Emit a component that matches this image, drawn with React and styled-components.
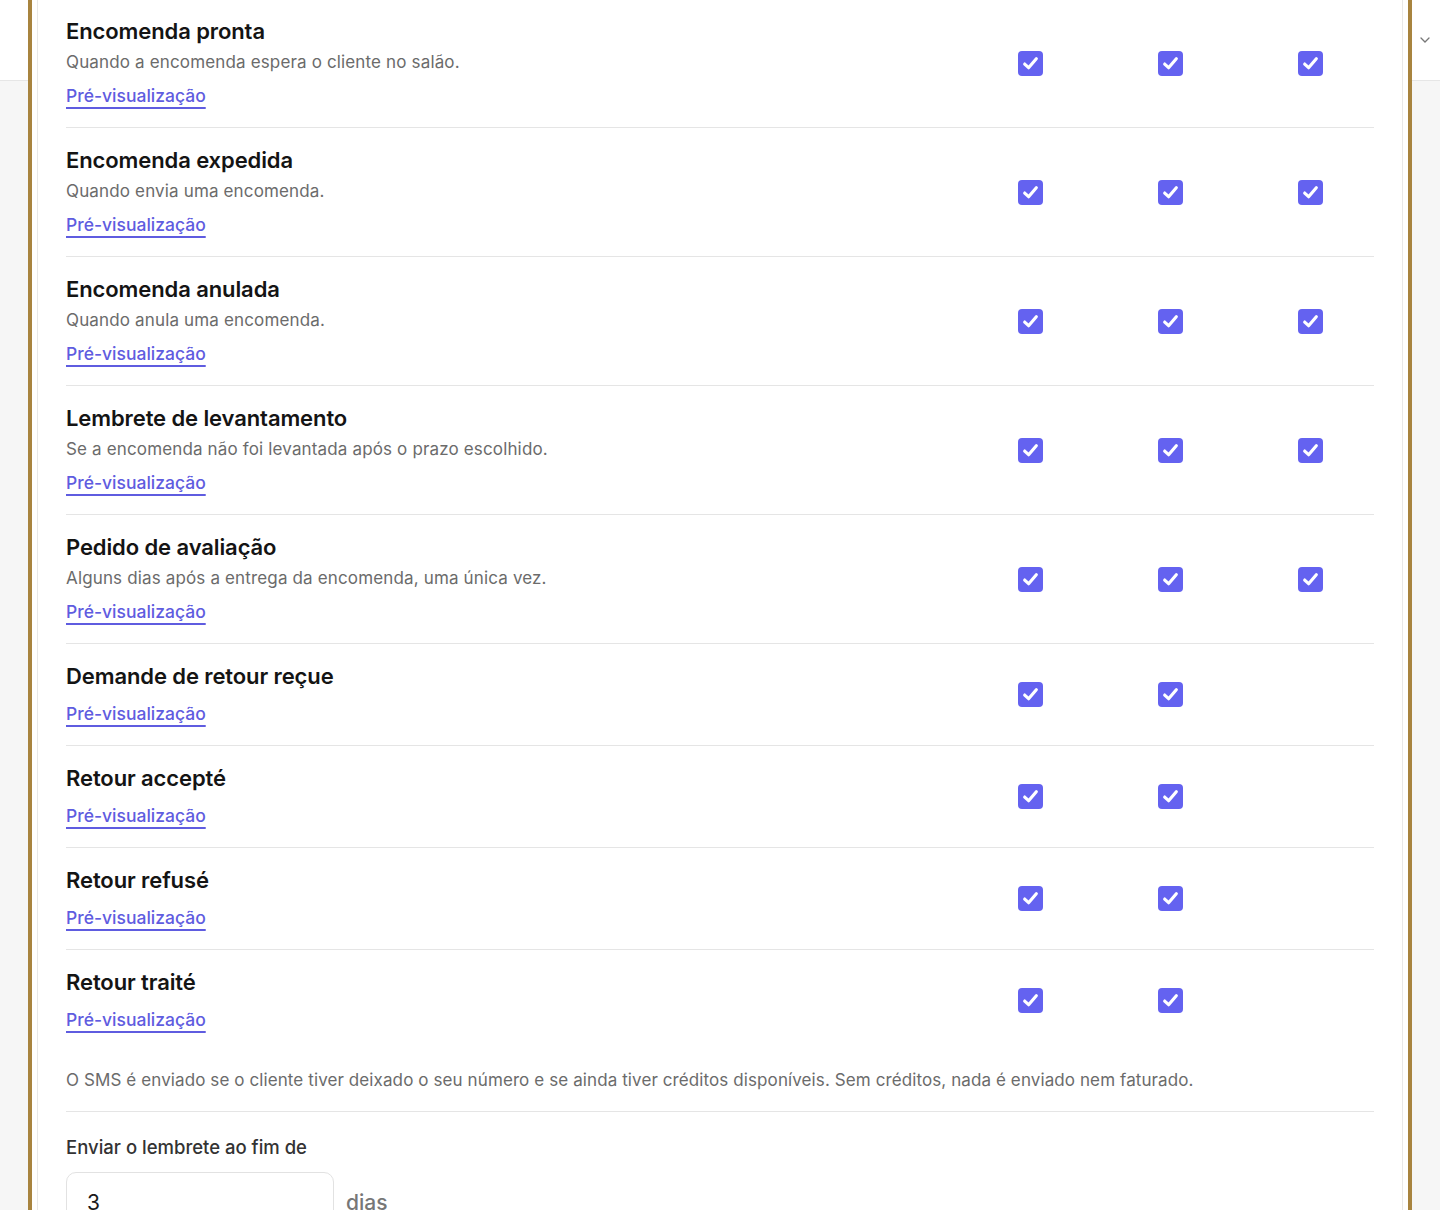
import React, { useState } from 'react'
import styled, { createGlobalStyle } from 'styled-components'

const GlobalStyle = createGlobalStyle`
  html, body {
    margin: 0;
    padding: 0;
    background: #f6f6f6;
    font-family: Inter, "Noto Sans", "Liberation Sans", sans-serif;
    -webkit-font-smoothing: antialiased;
  }
`

const notifications = [
  { id: 'ready', title: 'Encomenda pronta', desc: 'Quando a encomenda espera o cliente no salão.', channels: [true, true, true] },
  { id: 'shipped', title: 'Encomenda expedida', desc: 'Quando envia uma encomenda.', channels: [true, true, true] },
  { id: 'cancelled', title: 'Encomenda anulada', desc: 'Quando anula uma encomenda.', channels: [true, true, true] },
  { id: 'pickup', title: 'Lembrete de levantamento', desc: 'Se a encomenda não foi levantada após o prazo escolhido.', channels: [true, true, true] },
  { id: 'review', title: 'Pedido de avaliação', desc: 'Alguns dias após a entrega da encomenda, uma única vez.', channels: [true, true, true] },
  { id: 'return-req', title: 'Demande de retour reçue', channels: [true, true] },
  { id: 'return-ok', title: 'Retour accepté', channels: [true, true] },
  { id: 'return-ko', title: 'Retour refusé', channels: [true, true] },
  { id: 'return-done', title: 'Retour traité', channels: [true, true] },
]

const Page = styled.div`
  display: grid;
  min-height: 1210px;
`

const TopBar = styled.div`
  grid-area: 1 / 1;
  align-self: start;
  height: 80px;
  background: #fff;
  border-bottom: 1px solid #e6e6e6;
  display: flex;
  justify-content: flex-end;
  align-items: center;
  padding-right: 8px;
`

const Chevron = styled.svg`
  width: 14px;
  height: 14px;
`

const Frame = styled.div`
  grid-area: 1 / 1;
  z-index: 1;
  margin: 0 28px;
  border-left: 4px solid #a8843f;
  border-right: 4px solid #a8843f;
  background: #fff;
  padding: 0 5px;
`

const Card = styled.section`
  border-left: 1px solid #e8e8e8;
  border-right: 1px solid #e8e8e8;
  padding: 0 28px 40px;
  background: #fff;
`

const Row = styled.div`
  display: grid;
  grid-template-columns: 1fr repeat(3, 128px);
  column-gap: 12px;
  align-items: center;
  padding: ${p => (p.$first ? '17px' : '18px')} 0 18px;
  border-bottom: ${p => (p.$last ? 'none' : '1px solid #e5e5e5')};
`

const Info = styled.div`
  display: flex;
  flex-direction: column;
  align-items: flex-start;
`

const Title = styled.h3`
  margin: 0;
  font-size: 22px;
  line-height: 28px;
  font-weight: 600;
  color: #141414;
  letter-spacing: -0.1px;
`

const Desc = styled.p`
  margin: 5px 0 0;
  font-size: 17px;
  line-height: 24px;
  color: #6b6b6b;
  letter-spacing: 0.15px;
`

const PreviewLink = styled.a`
  margin-top: ${p => (p.$compact ? '11px' : '9px')};
  font-size: 17.5px;
  line-height: 26px;
  font-weight: 500;
  color: #5f5ce0;
  text-decoration: underline;
  text-decoration-thickness: 1.5px;
  text-underline-offset: 5px;
  cursor: pointer;
`

const Cell = styled.div`
  display: flex;
  justify-content: center;
`

const Box = styled.button`
  width: 25px;
  height: 25px;
  padding: 0;
  border: none;
  border-radius: 4px;
  background: ${p => (p.$checked ? '#6462f0' : '#fff')};
  box-shadow: ${p => (p.$checked ? 'none' : 'inset 0 0 0 1.5px #c8c8c8')};
  display: flex;
  align-items: center;
  justify-content: center;
  cursor: pointer;
`

const Note = styled.p`
  margin: 17px 0 0;
  padding-bottom: 19px;
  border-bottom: 1px solid #e5e5e5;
  font-size: 17px;
  line-height: 24px;
  color: #6b6b6b;
  letter-spacing: 0.1px;
`

const Field = styled.div`
  margin-top: 23px;
  display: flex;
  flex-direction: column;
  gap: 13px;
`

const Label = styled.label`
  font-size: 18.5px;
  line-height: 24px;
  font-weight: 500;
  color: #333;
`

const InputRow = styled.div`
  display: flex;
  align-items: center;
  gap: 12px;
`

const NumberInput = styled.input`
  width: 268px;
  height: 60px;
  box-sizing: border-box;
  border: 1px solid #e2e2e2;
  border-radius: 10px;
  padding: 0 20px;
  font-family: inherit;
  font-size: 21px;
  color: #1a1a1a;
  outline: none;
`

const Unit = styled.span`
  font-size: 21px;
  color: #777;
  font-weight: 500;
`

const Checkbox = ({ checked, onToggle }) => (
  <Box type="button" $checked={checked} onClick={onToggle} aria-pressed={checked}>
    {checked && (
      <svg width="19" height="19" viewBox="0 0 18 18">
        <path d="M3.5 9.5 L7.2 13 L14.5 4.5" fill="none" stroke="#fff" strokeWidth="3" strokeLinecap="round" strokeLinejoin="round" />
      </svg>
    )}
  </Box>
)

const App = () => {
  const [items, setItems] = useState(notifications)
  const [days, setDays] = useState('3')

  const toggle = (id, idx) => {
    setItems(prev => prev.map(n => n.id === id
      ? { ...n, channels: n.channels.map((c, i) => (i === idx ? !c : c)) }
      : n))
  }

  return (
    <>
      <GlobalStyle />
      <Page>
        <TopBar>
          <Chevron viewBox="0 0 14 14">
            <path d="M3 5 L7 9 L11 5" fill="none" stroke="#777" strokeWidth="1.3" strokeLinecap="round" />
          </Chevron>
        </TopBar>
        <Frame>
          <Card>
            {items.map((n, i) => (
              <Row key={n.id} $first={i === 0} $last={i === items.length - 1}>
                <Info>
                  <Title>{n.title}</Title>
                  {n.desc && <Desc>{n.desc}</Desc>}
                  <PreviewLink $compact={!n.desc}>Pré-visualização</PreviewLink>
                </Info>
                {[0, 1, 2].map(idx => (
                  <Cell key={idx}>
                    {n.channels[idx] !== undefined && (
                      <Checkbox checked={n.channels[idx]} onToggle={() => toggle(n.id, idx)} />
                    )}
                  </Cell>
                ))}
              </Row>
            ))}
            <Note>
              O SMS é enviado se o cliente tiver deixado o seu número e se ainda tiver créditos disponíveis. Sem créditos, nada é enviado nem faturado.
            </Note>
            <Field>
              <Label htmlFor="reminder-days">Enviar o lembrete ao fim de</Label>
              <InputRow>
                <NumberInput id="reminder-days" value={days} onChange={e => setDays(e.target.value)} />
                <Unit>dias</Unit>
              </InputRow>
            </Field>
          </Card>
        </Frame>
      </Page>
    </>
  )
}

export default App
